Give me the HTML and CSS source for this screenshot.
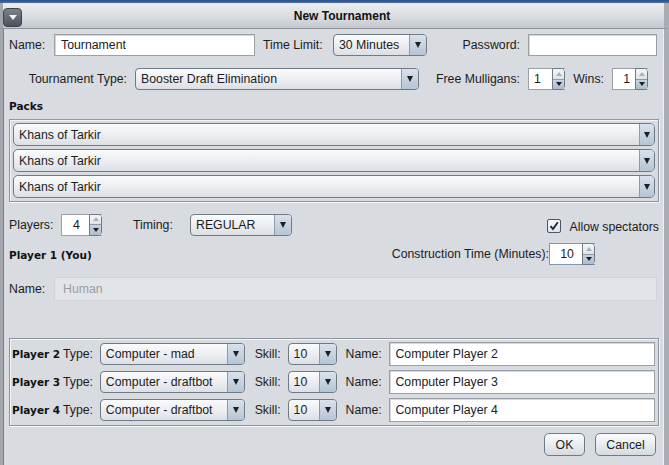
FILE: index.html
```html
<!DOCTYPE html>
<html>
<head>
<meta charset="utf-8">
<link rel="stylesheet" href="styles.css">
</head>
<body>
<div class="topbar"></div>
<div class="titlebar">
  <div class="menubtn"><span class="tri-white"></span></div>
  <div class="title">New Tournament</div>
</div>
<div class="window">
  <div class="row r1">
    <span class="lbl w45">Name:</span>
    <div class="field" style="width:201px">Tournament</div>
    <span class="lbl tl">Time Limit:</span>
    <div class="combo" style="width:94px"><span class="val">30 Minutes</span><span class="arrow"><i></i></span></div>
    <span class="lbl right" style="width:101px">Password:</span>
    <div class="field" style="width:129px"></div>
  </div>

  <div class="row r2">
    <span class="lbl right" style="width:126px">Tournament Type:</span>
    <div class="combo" style="width:284px"><span class="val">Booster Draft Elimination</span><span class="arrow"><i></i></span></div>
    <span class="lbl right" style="width:109px">Free Mulligans:</span>
    <div class="spinner" style="width:37px"><span class="sval">1</span><span class="sbtns"><b class="up"></b><b class="dn"></b></span></div>
    <span class="lbl right" style="width:47px">Wins:</span>
    <div class="spinner" style="width:36px"><span class="sval r">1</span><span class="sbtns"><b class="up"></b><b class="dn"></b></span></div>
  </div>

  <div class="section">Packs</div>
  <div class="panel packs">
    <div class="combo pack"><span class="val">Khans of Tarkir</span><span class="arrow"><i></i></span></div>
    <div class="combo pack"><span class="val">Khans of Tarkir</span><span class="arrow"><i></i></span></div>
    <div class="combo pack"><span class="val">Khans of Tarkir</span><span class="arrow"><i></i></span></div>
  </div>

  <div class="row r3">
    <span class="lbl" style="width:52px">Players:</span>
    <div class="spinner" style="width:41px"><span class="sval c">4</span><span class="sbtns"><b class="up"></b><b class="dn"></b></span></div>
    <span class="lbl timing">Timing:</span>
    <div class="combo" style="width:102px"><span class="val">REGULAR</span><span class="arrow"><i></i></span></div>
    <span class="spacer"></span>
    <span class="check"><svg width="10" height="10" viewBox="0 0 10 10"><path d="M1.5 5.2 L4 8 L8.8 1.2" fill="none" stroke="#1d2530" stroke-width="1.8"/></svg></span>
    <span class="lbl">Allow spectators</span>
  </div>

  <div class="row r4">
    <span class="bold">Player 1 (You)</span>
    <span class="spacer"></span>
    <span class="lbl">Construction Time (Minutes):</span>
    <div class="spinner focus" style="width:46px"><span class="sval c">10</span><span class="sbtns"><b class="up"></b><b class="dn"></b></span></div>
  </div>

  <div class="row r5">
    <span class="lbl w45">Name:</span>
    <div class="field disabled" style="width:603px">Human</div>
  </div>

  <div class="panel players">
    <div class="prow">
      <span class="bold pl">Player 2</span>
      <span class="lbl" style="width:37px">Type:</span>
      <div class="combo pc" style="width:145px"><span class="val">Computer - mad</span><span class="arrow"><i></i></span></div>
      <span class="lbl skill">Skill:</span>
      <div class="combo pc" style="width:49px"><span class="val">10</span><span class="arrow"><i></i></span></div>
      <span class="lbl pname">Name:</span>
      <div class="field pf">Computer Player 2</div>
    </div>
    <div class="prow">
      <span class="bold pl">Player 3</span>
      <span class="lbl" style="width:37px">Type:</span>
      <div class="combo pc" style="width:145px"><span class="val">Computer - draftbot</span><span class="arrow"><i></i></span></div>
      <span class="lbl skill">Skill:</span>
      <div class="combo pc" style="width:49px"><span class="val">10</span><span class="arrow"><i></i></span></div>
      <span class="lbl pname">Name:</span>
      <div class="field pf">Computer Player 3</div>
    </div>
    <div class="prow">
      <span class="bold pl">Player 4</span>
      <span class="lbl" style="width:37px">Type:</span>
      <div class="combo pc" style="width:145px"><span class="val">Computer - draftbot</span><span class="arrow"><i></i></span></div>
      <span class="lbl skill">Skill:</span>
      <div class="combo pc" style="width:49px"><span class="val">10</span><span class="arrow"><i></i></span></div>
      <span class="lbl pname">Name:</span>
      <div class="field pf">Computer Player 4</div>
    </div>
  </div>

  <div class="buttons">
    <div class="btn ok">OK</div>
    <div class="btn cancel">Cancel</div>
  </div>
</div>
</body>
</html>
```
FILE: styles.css
```css
* { box-sizing: border-box; }
html, body { margin: 0; padding: 0; }
body {
  width: 669px;
  height: 465px;
  overflow: hidden;
  background: #d8dbe0;
  font-family: "Liberation Sans", Arial, sans-serif;
  font-size: 12.3px;
  color: #1c1c1c;
}
.topbar {
  height: 3px;
  background: linear-gradient(#2c4f8a, #4a6fa8);
}
.titlebar {
  height: 25px;
  background: linear-gradient(#eceef1, #d7dade 60%, #c4c8ce);
  border-left: 3px solid #a3a7ad;
  border-right: 5px solid #a9adb3;
  display: flex;
  align-items: center;
  position: relative;
}
.menubtn {
  width: 19px;
  height: 19px;
  margin-left: 0;
  margin-top: 3px;
  border-radius: 4px;
  background: linear-gradient(#7c838d, #4c525b);
  border: 1px solid #3e434a;
  display: flex;
  align-items: center;
  justify-content: center;
}
.tri-white {
  width: 0; height: 0;
  border-left: 4px solid transparent;
  border-right: 4px solid transparent;
  border-top: 5px solid #f2f4f6;
}
.title {
  flex: 1;
  text-align: center;
  font-weight: bold;
  font-size: 12px;
  color: #111;
  padding-right: 2px;
}
.window {
  height: 437px;
  border-left: 3px solid #a3a7ad;
  border-right: 5px solid #aaaeb4;
  border-top: 1px solid #8e9299;
  background: #d8dbe0;
  padding: 0 0 0 6px;
  box-shadow: inset 1px 0 0 #7b8087, inset -1px 0 0 #eef0f3;
}
.row { display: flex; align-items: center; }
.lbl { white-space: nowrap; }
.lbl.right { text-align: right; padding-right: 8px; }
.w45 { width: 45px; }
.tl { width: 78px; padding-left: 8px; }
.timing { width: 88px; padding-left: 31px; }
.spacer { flex: 1; }
.bold {
  font-family: "DejaVu Sans", Verdana, sans-serif;
  font-weight: bold;
  font-size: 10.5px;
  color: #111;
}

.r1 { margin-top: 5px; height: 22px; }
.r2 { margin-top: 12px; height: 22px; }

.field {
  height: 22px;
  background: #fff;
  border: 1px solid #9aa0a8;
  box-shadow: inset 1px 1px 0 #d3d7dc;
  padding: 0 6px;
  display: flex;
  align-items: center;
  white-space: nowrap;
}
.field.disabled {
  height: 24px;
  background: #e1e4e8;
  border: 1px solid #d0d4d9;
  box-shadow: none;
  color: #9a9ea4;
  padding-left: 8px;
}

.combo {
  height: 22px;
  display: flex;
  border: 1px solid #6f7a87;
  border-radius: 4px;
  background: linear-gradient(#fafbfc, #eceef1 50%, #dcdfe4);
  overflow: hidden;
}
.combo .val {
  flex: 1;
  display: flex;
  align-items: center;
  padding-left: 5px;
  white-space: nowrap;
  overflow: hidden;
}
.combo .arrow {
  width: 17px;
  border-left: 1px solid #8e9aa8;
  background: linear-gradient(#d9e2ec, #b6c4d4);
  display: flex;
  align-items: center;
  justify-content: center;
}
.combo .arrow i {
  width: 0; height: 0;
  border-left: 3.5px solid transparent;
  border-right: 3.5px solid transparent;
  border-top: 6px solid #1b1f26;
}

.spinner {
  height: 22px;
  display: flex;
  background: #fff;
  border: 1px solid #9aa0a8;
  border-right: none;
}
.spinner.focus { border-color: #7e97b8; }
.sval {
  flex: 1;
  display: flex;
  align-items: center;
  padding-left: 5px;
}
.sval.c { justify-content: center; padding-left: 2px; }
.sval.r { justify-content: flex-end; padding-right: 5px; }
.sbtns {
  width: 13px;
  display: flex;
  flex-direction: column;
  border: 1px solid #6f7a87;
  border-radius: 0 4px 4px 0;
  margin-top: -1px;
  margin-bottom: -1px;
  overflow: hidden;
}
.sbtns b {
  flex: 1;
  display: flex;
  align-items: center;
  justify-content: center;
}
.sbtns .up {
  background: linear-gradient(#f4f6f8, #dfe4ea);
  border-bottom: 1px solid #8e9aa8;
}
.sbtns .dn { background: linear-gradient(#c8d3df, #aebdcd); }
.sbtns .up::after {
  content: "";
  border-left: 3px solid transparent;
  border-right: 3px solid transparent;
  border-bottom: 4px solid #a9b0b9;
}
.sbtns .dn::after {
  content: "";
  border-left: 3px solid transparent;
  border-right: 3px solid transparent;
  border-top: 4px solid #1b1f26;
}

.section {
  margin-top: 9px;
  height: 14px;
  line-height: 14px;
  font-family: "DejaVu Sans", Verdana, sans-serif;
  font-weight: bold;
  font-size: 10.5px;
  color: #111;
}
.panel {
  border: 1px solid #8f959d;
  box-shadow: inset 1px 1px 0 #f3f4f6, 1px 1px 0 #f3f4f6;
  padding: 3px;
}
.packs {
  margin-top: 6px;
  width: 650px;
  display: flex;
  flex-direction: column;
  gap: 3px;
}
.combo.pack { height: 23px; border-radius: 5px; }
.combo.pack .arrow { width: 15px; }

.r3 { margin-top: 11px; height: 23px; padding-right: 5px; }
.check {
  width: 14px;
  height: 14px;
  border: 1px solid #4b5560;
  border-radius: 2px;
  background: linear-gradient(#f7f8fa, #dfe3e8);
  display: flex;
  align-items: center;
  justify-content: center;
  margin-right: 8px;
  margin-top: 2px;
}
.r3 .lbl:last-child { margin-top: 4px; }

.r4 { margin-top: 7px; height: 22px; padding-right: 69px; }
.r4 .bold { margin-top: 1px; }
.r5 { margin-top: 12px; height: 24px; }

.players {
  margin-top: 37px;
  width: 650px;
  display: flex;
  flex-direction: column;
  gap: 4px;
  padding-left: 2px;
}
.prow { display: flex; align-items: center; height: 24px; }
.pl { width: 51px; }
.skill { width: 43px; padding-left: 10px; }
.pname { width: 53px; padding-left: 9px; }
.combo.pc { height: 22px; }
.field.pf { width: 266px; height: 24px; padding-left: 5px; }

.buttons {
  display: flex;
  justify-content: flex-end;
  gap: 10px;
  padding-right: 8px;
  margin-top: 7px;
}
.btn {
  height: 23px;
  border: 1px solid #6f7a87;
  border-radius: 5px;
  background: linear-gradient(#fbfcfd, #e9ecef 50%, #d6dae0);
  display: flex;
  align-items: center;
  justify-content: center;
}
.ok { width: 41px; }
.cancel { width: 61px; }
```
